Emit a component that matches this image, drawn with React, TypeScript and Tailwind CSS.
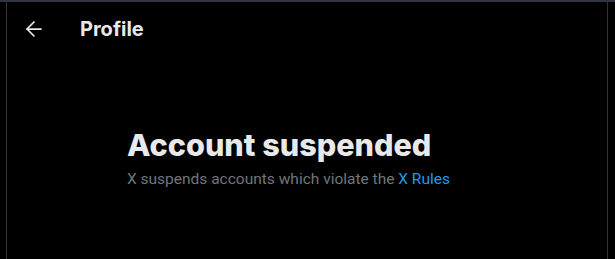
import { ArrowLeft } from "lucide-react";

const body = { fontFamily: 'Roboto, "Liberation Sans", sans-serif' };
const display = { fontFamily: 'Inter, Roboto, sans-serif' };

export default function App() {
    return (
        <div className="w-[615px] h-[259px] bg-black flex flex-col overflow-hidden" style={body}>
            <div className="h-[2px] bg-[#2f3640] shrink-0" />
            <div className="ml-[6px] w-[602px] flex-1 border-x border-[#2f3336] flex flex-col">
                <div className="h-[53px] flex items-center px-[15px]">
                    <div className="w-[58px] flex items-center">
                        <ArrowLeft className="w-6 h-6 text-[#e7e9ea]" strokeWidth={1.75} />
                    </div>
                    <h2 className="text-[20px] leading-6 font-bold text-[#e7e9ea]" style={display}>Profile</h2>
                </div>
                <div className="mx-auto mt-[72px] w-[400px] px-5">
                    <div className="text-[30.6px] leading-9 font-extrabold text-[#e7e9ea]" style={display}>Account suspended</div>
                    <p className="mt-[6px] text-[15.5px] leading-5 text-[#71767b]">
                        X suspends accounts which violate the <span className="text-[#1d9bf0]">X Rules</span>
                    </p>
                </div>
            </div>
        </div>
    );
}
